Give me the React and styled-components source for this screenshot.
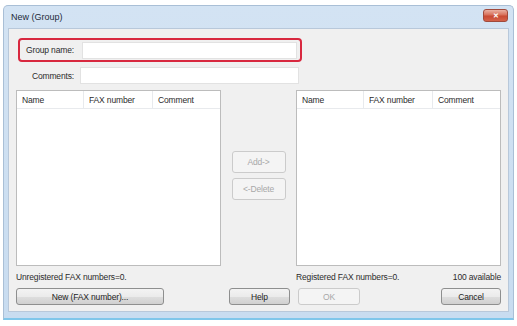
import React from 'react';
import styled, {createGlobalStyle, css} from 'styled-components';

const Global = createGlobalStyle`
    html, body {
        margin: 0;
        padding: 0;
        background: #ffffff;
        font-family: "Liberation Sans", Arial, sans-serif;
    }
`;

const Page = styled.div`
    width: 517px;
    height: 326px;
    padding: 5px 3px 0 3px;
    box-sizing: border-box;
`;

const Window = styled.div`
    width: 511px;
    height: 315px;
    box-sizing: border-box;
    background: linear-gradient(180deg, #d3e3f3 0%, #c8dcf0 100%);
    border: 1px solid #a9bfd6;
    border-bottom: 2px solid #7fc6ea;
    border-radius: 5px 5px 0 0;
    padding: 0 4px 6px 4px;
    display: flex;
    flex-direction: column;
`;

const TitleBar = styled.div`
    height: 22px;
    display: flex;
    align-items: center;
    justify-content: space-between;
    padding: 0 1px 0 3px;
`;

const Title = styled.span`
    font-size: 9px;
    color: #1e2a3a;
`;

const CloseButton = styled.div`
    width: 23px;
    height: 11px;
    margin-top: -3px;
    border-radius: 3px;
    border: 1px solid #a04a3c;
    background: linear-gradient(180deg, #eab0a2 0%, #d8705a 45%, #c94a33 55%, #d4624a 100%);
    display: flex;
    align-items: center;
    justify-content: center;
    color: #fff;
    font-size: 7px;
    font-weight: bold;
    line-height: 1;
`;

const Client = styled.div`
    flex: 1;
    background: #f0f0f0;
    border: 1px solid #b8c8da;
    padding: 9px 7px 0 7px;
    display: flex;
    flex-direction: column;
    font-size: 8.5px;
    letter-spacing: -0.15px;
    color: #2b2b2b;
`;

const FieldBox = styled.div`
    display: flex;
    align-items: center;
    gap: 6px;
    width: 284px;
    height: ${props => props.highlight ? 24 : 17}px;
    margin-top: ${props => props.highlight ? 0 : 5}px;
    box-sizing: border-box;
    margin-left: 2px;
    padding: 0 3px 0 6px;
    ${props => props.highlight && css`
        border: 2px solid #d8283f;
        border-radius: 4px;
    `}
`;

const Label = styled.span`
    width: 50px;
    text-align: ${props => props.right ? 'right' : 'left'};
    white-space: nowrap;
`;

const Input = styled.div`
    flex: 1;
    height: 17px;
    background: #fff;
    border: 1px solid #e2e2e2;
    box-sizing: border-box;
`;

const Lists = styled.div`
    display: grid;
    grid-template-columns: 205px 75px 205px;
    margin-top: 6px;
    height: 176px;
`;

const ListView = styled.div`
    background: #fff;
    border: 1px solid #bcbcbc;
    display: flex;
    flex-direction: column;
`;

const HeaderRow = styled.div`
    display: grid;
    grid-template-columns: 67px 69px 1fr;
    height: 17px;
    border-bottom: 1px solid #e8eaed;
`;

const HeaderCell = styled.div`
    padding-left: 5px;
    display: flex;
    align-items: center;
    border-right: 1px solid #e8eaed;
    &:last-child {
        border-right: none;
    }
`;

const Middle = styled.div`
    display: flex;
    flex-direction: column;
    align-items: center;
    gap: 5px;
    padding-top: 61px;
`;

const Button = styled.div`
    width: ${props => props.w || 54}px;
    height: ${props => props.h || 17}px;
    margin-left: ${props => props.ml || 0};
    box-sizing: border-box;
    border: 1px solid ${props => props.disabled ? '#cbcbcb' : '#8e8f8f'};
    border-radius: 3px;
    background: ${props => props.disabled
        ? '#f4f4f4'
        : 'linear-gradient(180deg, #f3f3f3 0%, #ebebeb 50%, #dedede 51%, #d0d0d0 100%)'};
    color: ${props => props.disabled ? '#a8a8a8' : '#1e1e1e'};
    display: flex;
    align-items: center;
    justify-content: center;
    white-space: nowrap;
`;

const StatusRow = styled.div`
    display: grid;
    grid-template-columns: 205px 75px 205px;
    margin-top: 5px;
    height: 12px;
`;

const Status = styled.div`
    display: flex;
    justify-content: space-between;
    align-items: center;
`;

const ButtonRow = styled.div`
    display: flex;
    align-items: center;
    margin-top: 5px;
`;

const Columns = () => (
    <HeaderRow>
        <HeaderCell>Name</HeaderCell>
        <HeaderCell>FAX number</HeaderCell>
        <HeaderCell>Comment</HeaderCell>
    </HeaderRow>
);

function App(){
    return (
        <Page>
            <Global />
            <Window>
                <TitleBar>
                    <Title>New (Group)</Title>
                    <CloseButton>✕</CloseButton>
                </TitleBar>
                <Client>
                    <FieldBox highlight>
                        <Label>Group name:</Label>
                        <Input />
                    </FieldBox>
                    <FieldBox>
                        <Label right>Comments:</Label>
                        <Input />
                    </FieldBox>
                    <Lists>
                        <ListView><Columns /></ListView>
                        <Middle>
                            <Button h={22} disabled>Add-&gt;</Button>
                            <Button h={22} disabled>&lt;-Delete</Button>
                        </Middle>
                        <ListView><Columns /></ListView>
                    </Lists>
                    <StatusRow>
                        <Status>Unregistered FAX numbers=0.</Status>
                        <div />
                        <Status>
                            <span>Registered FAX numbers=0.</span>
                            <span>100 available</span>
                        </Status>
                    </StatusRow>
                    <ButtonRow>
                        <Button w={148}>New (FAX number)...</Button>
                        <Button w={61} ml="65px">Help</Button>
                        <Button w={62} ml="8px" disabled>OK</Button>
                        <Button w={60} ml="auto">Cancel</Button>
                    </ButtonRow>
                </Client>
            </Window>
        </Page>
    );
}

export default App;
